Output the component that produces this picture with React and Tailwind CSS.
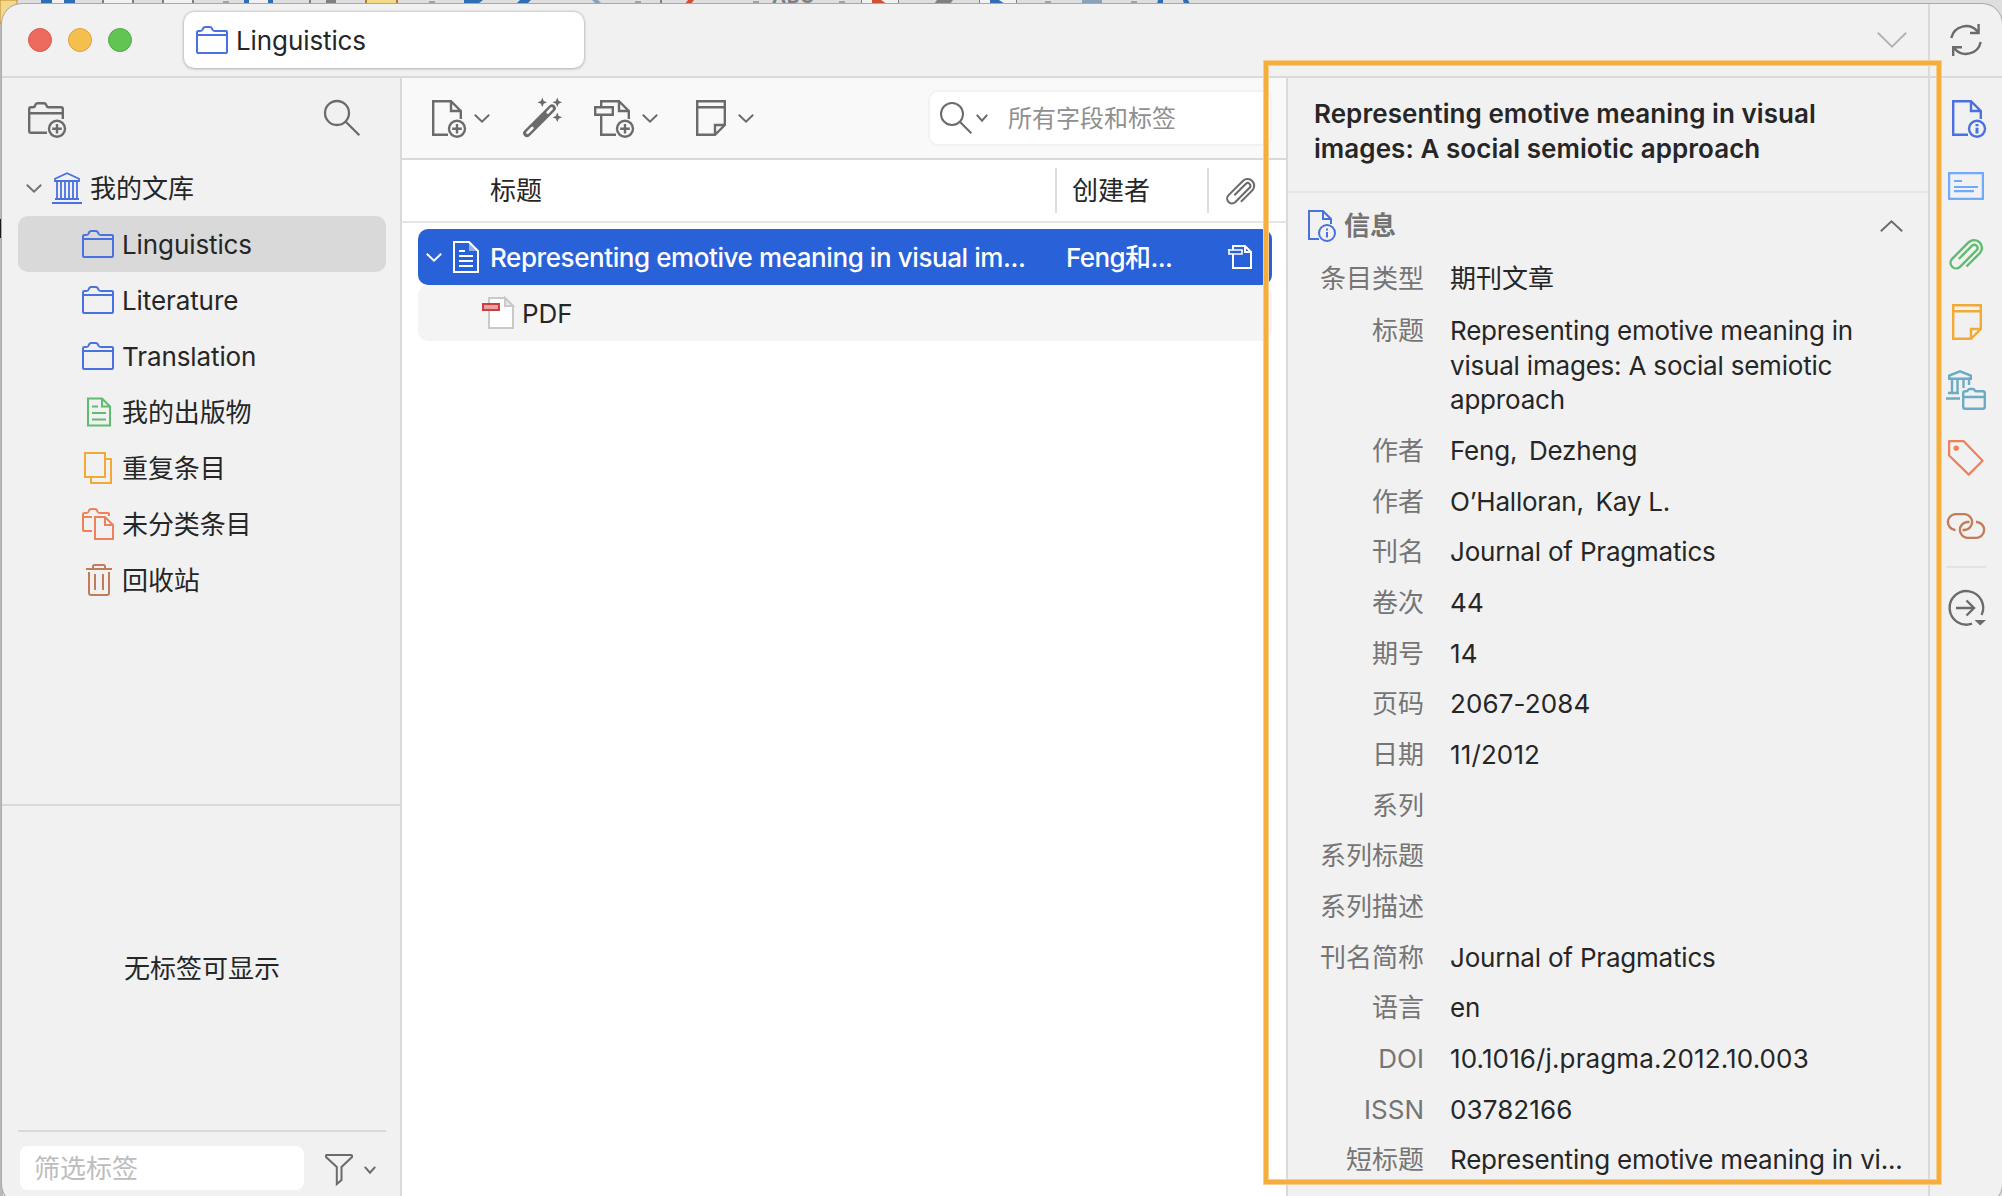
import React from "react";

const Svg = ({ w, h, className = "", sw = 2, children }) => (
  <svg
    width={w}
    height={h}
    viewBox={`0 0 ${w} ${h}`}
    fill="none"
    stroke="currentColor"
    strokeWidth={sw}
    className={`block shrink-0 overflow-visible ${className}`}
  >
    {children}
  </svg>
);

const Folder = ({ className = "text-[#4a71e0]" }) => (
  <Svg w={32} h={32} className={className}>
    <path d="M2.5 7H4.5Q6 7 6.6 5.5L7.3 4Q7.8 3 9 3H14Q15.2 3 15.7 4L16.4 5.5Q17 7 18.5 7H30Q31 7 31 8V28Q31 29 30 29H2Q1 29 1 28V8Q1 7 2.5 7ZM1 11H31" />
  </Svg>
);

const Chevron = ({ w = 16, h = 9, className = "", sw = 2, up = false }) => (
  <Svg w={w} h={h} sw={sw} className={className}>
    <path d={up ? `M.8 ${h - 0.8}L${w / 2} 1.3L${w - 0.8} ${h - 0.8}` : `M.8 .8L${w / 2} ${h - 1.3}L${w - 0.8} .8`} />
  </Svg>
);

const Library = () => (
  <Svg w={30} h={32} className="text-[#4a71e0]">
    <path d="M3 9V6.8L15 1.3L27 6.8V9ZM3 27H27M0 31H30M5 9V27M9 9V27M13 9V27M17 9V27M21 9V27M25 9V27" strokeWidth="1.8" />
  </Svg>
);

const Publications = () => (
  <Svg w={32} h={32} className="text-[#5fbc6f]">
    <path d="M6 2.5H20L28 10.5V29.5H6ZM20 2.5V10.5H28M10 10.5H16M10 17H24M10 23.5H24" />
  </Svg>
);

const Duplicates = () => (
  <Svg w={32} h={32} className="text-[#f0aa35]">
    <path d="M3 1H23V25H3ZM23 7H29V31H9V25" />
  </Svg>
);

const Unfiled = () => (
  <Svg w={32} h={32} className="text-[#f0805a]">
    <path d="M10 23H2Q1 23 1 22V6Q1 5 2.5 5H4.5Q6 5 6.6 3.5Q7.2 1 9 1H13Q14.8 1 15.4 3.5Q16 5 17.5 5H26Q27 5 27 6V8M1 9H10M13 9H23L31 17V31H13ZM23 9V17H31" />
  </Svg>
);

const Trash = () => (
  <Svg w={32} h={32} className="text-[#c07d58]">
    <path d="M4 5H30M11 5V2.5Q11 1 12.5 1H21.5Q23 1 23 2.5V5M7 8V29Q7 31 9 31H25Q27 31 27 29V8M13 10V26M21 10V26" />
  </Svg>
);

const Search = ({ big = false }) => (
  <Svg w={big ? 36 : 32} h={big ? 36 : 32}>
    {big ? <path d="M1 13a12 12 0 1 0 24 0a12 12 0 1 0-24 0M21.5 21.5L35.3 35.3" strokeWidth="2.3" /> : <path d="M1 12a11 11 0 1 0 22 0a11 11 0 1 0-22 0M19.8 19.8L31.3 31.3" />}
  </Svg>
);

const NewCollection = () => (
  <Svg w={38} h={38} sw={2.4}>
    <path d="M19 32.8H3Q1.2 32.8 1.2 31V9Q1.2 7.2 3 7.2H5Q6.8 7.2 7.2 5.2Q7.8 3.2 9.5 3.2H16Q17.8 3.2 18.2 5.2Q18.8 7.2 20.5 7.2H33Q34.8 7.2 34.8 9V19M1.2 13.2H34.8" />
    <circle cx="29" cy="28.8" r="8" />
    <path d="M29 24V33.6M24.2 28.8H33.8" />
  </Svg>
);

const DocBadge = ({ info = false, className = "" }) => (
  <Svg w={34} h={38} sw={2.4} className={className}>
    <path d="M16 34.8H1.2V1.2H19L28.8 11V19M19 1.2V11H28.8" />
    <circle cx="25" cy="28.8" r="8" />
    {info ? <path d="M25 24V26.2M25 27.8V33.4" strokeWidth="3" /> : <path d="M25 24V33.6M20.2 28.8H29.8" />}
  </Svg>
);

const InfoSmall = () => (
  <Svg w={28} h={32} className="text-[#4a71e0]">
    <path d="M11 29H1V1H15L23 9V14M15 1V9H23" />
    <circle cx="19" cy="23" r="8" />
    <path d="M19 18.4V20.4M19 22V27.4" />
  </Svg>
);

const Wand = () => (
  <Svg w={39} h={39} sw={0}>
    <path d="M4 35.2L29 10.2" strokeWidth="7.6" strokeLinecap="round" />
    <path d="M4.5 34.7L9.3 29.9M24.8 14.4L28.6 10.6" stroke="#f9f9f9" strokeWidth="2.8" strokeLinecap="round" />
    {[[19.3, 4.3], [34.3, 4.3], [34.3, 19.3]].map(([x, y]) => (
      <path key={`${x}-${y}`} fill="currentColor" transform={`translate(${x} ${y})`} d="M0-4.8L1.4-1.4L4.8 0L1.4 1.4L0 4.8L-1.4 1.4L-4.8 0L-1.4-1.4Z" />
    ))}
  </Svg>
);

const AddAttachment = () => (
  <Svg w={40} h={38} sw={2.4}>
    <path d="M22 34.8H7.2V16M7.2 6V1.2H25L34.8 11V19M25 1.2V11H34.8M1.2 7.2H18.8V14.8H1.2Z" />
    <circle cx="31" cy="28.8" r="8" />
    <path d="M31 24V33.6M26.2 28.8H35.8" />
  </Svg>
);

const Note = ({ className = "" }) => (
  <Svg w={30} h={36} sw={2.4} className={className}>
    <path d="M1.2 1.2H28.8V25L19 34.8H1.2ZM1.2 7.2H28.8M28.8 25H19V34.8" />
  </Svg>
);

const Clip = ({ small = false, className = "" }) => (
  <svg width={small ? 31 : 36} height={small ? 28 : 32} viewBox="0 0 36 32" fill="none" stroke="currentColor" strokeWidth="2.4" className={`block shrink-0 overflow-visible ${className}`}>
    <path d="M18.5 28.5L32 15A7.8 7.8 0 0 0 21 4L3.9 21.1A5.6 5.6 0 0 0 11.8 29L28.8 12A3.2 3.2 0 0 0 24.3 7.5L10.8 21" />
  </svg>
);

const Abstract = () => (
  <Svg w={36} h={28} sw={2.2} className="text-[#71a9fb]">
    <path d="M1.1 1.1H34.9V26.9H1.1ZM6 9H14M6 15H30M6 19.2H26" />
  </Svg>
);

const LibraryFolder = () => (
  <Svg w={40} h={40} sw={2.4} className="text-[#6babc4]">
    <path d="M3.2 8.8V5.6L14 1.3L24.8 5.6V8.8ZM6 9V23M11.5 9V23M17.5 9V18M23 9V15M2 23H13M0 28.5H14" />
    <path d="M17.2 36.8V23.2Q17.2 21.2 19.2 21.2H20.5Q21.5 21.2 22 20Q22.5 19 23.5 19H27Q28 19 28.5 20Q29 21.2 30 21.2H36.8Q38.8 21.2 38.8 23.2V36.8Q38.8 38.8 36.8 38.8H19.2Q17.2 38.8 17.2 36.8ZM17.2 27H38.8" />
  </Svg>
);

const Tag = () => (
  <Svg w={36} h={36} sw={2.2} className="text-[#f0805a]">
    <path d="M1.1 1.1H15.5L34.6 20.8L20.8 34.6L1.1 15.5Z" strokeLinejoin="round" />
    <circle cx="8.2" cy="8.2" r="2.6" fill="currentColor" stroke="none" />
  </Svg>
);

const Related = () => (
  <Svg w={40} h={26} sw={2.3} className="text-[#c07d58]">
    <path d="M9.5 17H9A8 8 0 0 1 9 1.1H19A8 8 0 0 1 19 17H16.5M23.5 9H21A8 8 0 0 0 21 24.9H31A8 8 0 0 0 31 9H30" />
  </Svg>
);

const Locate = () => (
  <Svg w={38} h={36} sw={2.4} className="text-[#6b6b6b]">
    <path d="M24 33.7A16.8 16.8 0 1 1 33.6 25M8 18H26M18.5 10.5L26 18L18.5 25.5" />
    <path d="M26.5 30H38L32.2 35.5Z" fill="currentColor" stroke="none" />
  </Svg>
);

const Sync = () => (
  <Svg w={32} h={32} sw={2.4} className="text-[#6b6b6b]">
    <path d="M1.3 14A15 15 0 0 1 27.5 7.5M28.6 0V9H20M30.7 18A15 15 0 0 1 4.5 24.5M3.2 32V23.2H12" />
  </Svg>
);

const ItemDoc = () => (
  <Svg w={26} h={32} className="text-white">
    <path d="M16 1V10H25Z" fill="#ffffff80" stroke="none" />
    <path d="M1 1H16L25 10V31H1ZM6 10H12M6 15H20M6 20H20M6 25H20" />
  </Svg>
);

const PdfFile = () => (
  <Svg w={32} h={32}>
    <path d="M7 1H23L31 9V31H7Z" fill="#fff" stroke="#c9c9c9" />
    <path d="M23 1V9H31Z" fill="#e9e9e9" stroke="#c9c9c9" />
    <path d="M1 7H17V13H1Z" fill="#e6a3a5" stroke="#cb3e42" />
  </Svg>
);

const PdfState = () => (
  <Svg w={24} h={24} className="text-white">
    <path d="M5 5V1H17L23 7V23H5V9M17 1V7H23" />
    <path d="M0 5H14V9H1V4" strokeWidth="1.6" />
  </Svg>
);

const Funnel = () => (
  <Svg w={28} h={31}>
    <path d="M1 1.5Q1 1 1.5 1H26Q27 1 27 1.5V3L16.5 13V26L11.8 30V13L1 3Z" />
  </Svg>
);

/* Slice of the application window that sits behind this one. */
const Backdrop = () => (
  <svg width="2002" height="1196" className="absolute inset-0 block">
    <rect width="2002" height="1196" fill="#dedede" />
    <rect width="3" height="1196" fill="#b9b9b9" />
    <rect width="17" height="23" fill="#f5d98a" stroke="#b98a35" />
    <g fill="#2f6db5">
      <path d="M41 0H75V4H41ZM244 0H249V4H244ZM268 0H273V4H268ZM464 0H483L478 4H464ZM520 0H531L527 4H516ZM1158 0H1163V4H1157ZM1183 0H1188L1190 4H1184Z" />
    </g>
    <path d="M52 0H64V4H52ZM249 0H268V4H249ZM862 0H898V4H862ZM980 0H1016V4H980ZM103 0H133V4H103ZM164 0H193V4H164Z" fill="#f1f1f1" />
    <path d="M872 0H881L887 4H872ZM688 0H694L691 4H685Z" fill="#cf5034" />
    <path d="M990 0H999L1005 4H990Z" fill="#2f6db5" />
    <path d="M367 0H397V4H367Z" fill="#f5d98a" />
    <path d="M365 0H367V4H365ZM396 0H398V4H396Z" fill="#b07a2a" />
    <path d="M102 0H104V4H102ZM132 0H134V4H132ZM162 0H164V4H162ZM192 0H194V4H192ZM309 0H311V4H309ZM326 0H336V3H326ZM660 0H662V4H660ZM937 0H953L950 4H934ZM861 0H862V4H861ZM898 0H899V4H898ZM979 0H980V4H979ZM1016 0H1017V4H1016Z" fill="#808080" />
    <text x="772" y="2.5" textLength="42" fontSize="19" fontWeight="700" fill="#808080">ABC</text>
    <path d="M223 1H229V3H223ZM429 1H435V3H429ZM635 1H641V3H635ZM753 1H759V3H753ZM839 1H845V3H839ZM1045 1H1051V3H1045ZM1131 1H1137V3H1131Z" fill="#a2a2a2" />
    <path d="M1082 0H1102V4H1082ZM592 0H598L602 4H596Z" fill="#8aa2b8" />
    <path d="M0 219H2V238H0Z" fill="#1b1b1b" />
  </svg>
);

const tree = [
  { icon: <Folder />, label: "Linguistics", active: true },
  { icon: <Folder />, label: "Literature" },
  { icon: <Folder />, label: "Translation" },
  { icon: <Publications />, label: "我的出版物" },
  { icon: <Duplicates />, label: "重复条目" },
  { icon: <Unfiled />, label: "未分类条目" },
  { icon: <Trash />, label: "回收站" },
];

const fields = [
  ["标题", "Representing emotive meaning in visual images: A social semiotic approach"],
  ["作者", "Feng,\u2009 Dezheng"],
  ["作者", "O’Halloran,\u2009 Kay L."],
  ["刊名", "Journal of Pragmatics"],
  ["卷次", "44"],
  ["期号", "14"],
  ["页码", "2067-2084"],
  ["日期", "11/2012"],
  ["系列", ""],
  ["系列标题", ""],
  ["系列描述", ""],
  ["刊名简称", "Journal of Pragmatics"],
  ["语言", "en"],
  ["DOI", "10.1016/j.pragma.2012.10.003"],
  ["ISSN", "03782166"],
  ["短标题", "Representing emotive meaning in vi..."],
];

const Sidebar = () => (
  <aside className="box-content flex w-[398px] shrink-0 flex-col border-r-2 border-[#d9d9d9] text-[#262626]">
    <div className="flex h-[82px] items-start justify-between pl-[26px] pr-[40px] pt-[22px] text-[#6b6b6b]">
      <NewCollection />
      <Search big />
    </div>
    <div className="flex h-14 items-center pl-6">
      <Chevron className="text-[#737373]" />
      <span className="ml-[10px]"><Library /></span>
      <span className="ml-2 pt-px">我的文库</span>
    </div>
    {tree.map((t) => (
      <div key={t.label} className={`ml-4 mr-[14px] flex h-14 items-center gap-2 rounded-[10px] pl-16 ${t.active ? "bg-[#d9d9d9]" : ""}`}>
        {t.icon}
        <span className="pt-px tracking-[-0.1px]">{t.label}</span>
      </div>
    ))}
    <div className="flex-1" />
    <div className="flex h-[400px] shrink-0 flex-col border-t-2 border-[#d9d9d9] pl-4 pr-[14px]">
      <div className="flex flex-1 items-center justify-center">无标签可显示</div>
      <div className="flex h-[74px] items-start border-t-2 border-[#d9d9d9] pl-[2px] pt-[14px]">
        <div className="flex h-11 w-[284px] items-center rounded-lg bg-white pl-[14px] text-[#bdbdbd]">筛选标签</div>
        <span className="ml-[21px] mt-2 text-[#6b6b6b]"><Funnel /></span>
        <Chevron w={12} h={8} className="ml-[11px] mt-5 text-[#6b6b6b]" />
      </div>
    </div>
  </aside>
);

const Items = () => (
  <main className="flex w-[884px] shrink-0 flex-col bg-white">
    <div className="flex h-[82px] shrink-0 items-start border-b-2 border-[#d9d9d9] bg-[#f9f9f9] pl-[30px] text-[#6b6b6b]">
      <div className="mt-[22px] flex"><DocBadge /></div>
      <Chevron className="ml-2 mt-9" />
      <div className="ml-[33px] mt-5"><Wand /></div>
      <div className="ml-8 mt-[22px]"><AddAttachment /></div>
      <Chevron className="ml-2 mt-9" />
      <div className="ml-[38px] mt-[22px]"><Note /></div>
      <Chevron className="ml-3 mt-9" />
      <div className="ml-[174px] mt-3 flex h-[56px] w-[344px] items-center rounded-[10px] border-2 border-[#f2f2f2] bg-white pl-[10px]">
        <Search />
        <Chevron w={12} h={8} className="ml-1" />
        <span className="ml-5 text-[24px] text-[#8f8f8f]">所有字段和标签</span>
      </div>
    </div>
    <div className="flex h-[63px] shrink-0 items-center border-b-2 border-[#e5e5e5] pl-[88px] text-[#262626]">
      <span className="w-[565px]">标题</span>
      <span className="h-[45px] w-[152px] border-l-2 border-[#dedede] pl-[15px] leading-[45px]">创建者</span>
      <span className="flex h-[45px] items-center border-l-2 border-[#dedede] pl-4 text-[#6b6b6b]"><Clip small /></span>
    </div>
    <div className="ml-4 mr-[14px] mt-[6px] flex h-14 items-center rounded-[10px] bg-[#2961d9] pl-2 font-medium text-white">
      <Chevron />
      <span className="ml-[11px]"><ItemDoc /></span>
      <span className="ml-[11px] w-[576px] tracking-[-0.42px]">Representing emotive meaning in visual im...</span>
      <span className="w-[162px] tracking-[-0.6px]">Feng和...</span>
      <PdfState />
    </div>
    <div className="ml-4 mr-[14px] flex h-14 items-center gap-2 rounded-[10px] bg-[#f4f4f4] pl-16 text-[#262626]">
      <PdfFile />
      <span>PDF</span>
    </div>
  </main>
);

const Details = () => (
  <section className="flex w-[644px] shrink-0 flex-col border-x-2 border-[#dadada] text-[#262626]">
    <h1 className="h-[115px] shrink-0 border-b-2 border-[#e5e5e5] pl-[26px] pt-[18px] font-semibold leading-[35px] tracking-[0.06px]">
      Representing emotive meaning in visual
      <br />
      images: A social semiotic approach
    </h1>
    <div className="flex h-[59px] shrink-0 items-center pl-5 pr-[25px] pt-[6px]">
      <InfoSmall />
      <h2 className="ml-2 flex-1 font-semibold text-[#737373]">信息</h2>
      <Chevron w={23} h={12} up className="text-[#6b6b6b]" />
    </div>
    <div className="flex h-[54px] shrink-0 items-center pb-[2px]">
      <span className="w-[136px] text-right text-[#757575]">条目类型</span>
      <span className="pl-[26px]">期刊文章</span>
    </div>
    {fields.map(([label, value], i) => (
      <div key={i} className="flex shrink-0 py-2 leading-[34.67px]">
        <span className="w-[136px] shrink-0 text-right text-[#757575]">{label}</span>
        <span
          className={
            i === 0
              ? "w-[450px] pl-[26px] tracking-[-0.2px]"
              : /^\d/.test(value)
                ? "whitespace-pre pl-[26px] tracking-[0.12px]"
                : "whitespace-pre pl-[26px] tracking-[-0.2px]"
          }
        >
          {value || " "}
        </span>
      </div>
    ))}
  </section>
);

const SideNav = () => (
  <nav className="flex flex-1 flex-col pt-[6px]">
    {[
      <DocBadge key="i" info className="ml-[22px] mt-[2px] text-[#4a71e0]" />,
      <Abstract key="a" />,
      <Clip key="c" className="text-[#5fbc6f]" />,
      <Note key="n" className="ml-[22px] text-[#f0aa35]" />,
      <LibraryFolder key="l" />,
      <Tag key="t" />,
      <Related key="r" />,
    ].map((icon, i) => (
      <div key={i} className={`flex h-[68px] items-center ${i === 0 || i === 3 ? "" : i === 4 || i === 6 ? "pl-4" : "pl-[18px]"}`}>
        {icon}
      </div>
    ))}
    <div className="ml-4 mt-[6px] h-[2px] w-10 bg-[#e3e3e3]" />
    <div className="ml-[18px] mt-[22px]"><Locate /></div>
  </nav>
);

export default function App() {
  return (
    <div className="relative h-[1196px] w-[2002px] overflow-hidden font-['Inter','Noto_Sans_CJK_SC',sans-serif] text-[26px] leading-[35px]">
      <Backdrop />
      <div className="relative ml-[2px] mt-1 flex h-[1200px] w-[2000px] flex-col overflow-hidden rounded-[20px] bg-[#f1f1f1] shadow-[0_0_0_1px_#a9a9a9]">
        <header className="flex h-[74px] shrink-0 items-stretch border-b-2 border-[#d9d9d9]">
          <div className="flex w-[1926px] items-center">
            <div className="ml-[26px] flex gap-4">
              <i className="size-6 rounded-full border border-[#d6594d] bg-[#ed6a5e]" />
              <i className="size-6 rounded-full border border-[#dba33c] bg-[#f5bf4f]" />
              <i className="size-6 rounded-full border border-[#50ab40] bg-[#61c554]" />
            </div>
            <div className="ml-[52px] flex h-[56px] w-[400px] items-center gap-2 rounded-[10px] bg-white pl-3 text-[#262626] shadow-[0_0_3px_rgba(0,0,0,0.3),0_1px_3px_rgba(0,0,0,0.15)]">
              <Folder />
              <span className="pt-px tracking-[-0.1px]">Linguistics</span>
            </div>
            <Chevron w={30} h={16} className="ml-auto mr-[21px] text-[#b3b3b3]" />
          </div>
          <div className="flex flex-1 items-center border-l-2 border-[#dadada] pl-5">
            <Sync />
          </div>
        </header>
        <div className="flex min-h-0 flex-1">
          <Sidebar />
          <Items />
          <Details />
          <SideNav />
        </div>
      </div>
      <div className="pointer-events-none absolute left-[1264px] top-[61px] h-[1123px] w-[677px] border-4 border-[#f5ae3d] shadow-[0_0_0_1px_#f7cf8c,inset_0_0_0_1px_#f7cf8c]" />
    </div>
  );
}
